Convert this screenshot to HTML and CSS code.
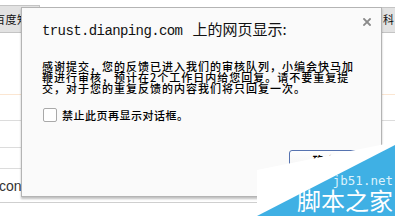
FILE: index.html
```html
<!DOCTYPE html>
<html>
<head>
<meta charset="utf-8">
<link rel="stylesheet" href="styles.css">
</head>
<body>
<div class="page">
  <div class="tabs">
    <div class="tab tab-left"><span class="tab-text">百度知</span></div>
    <div class="tab tab-right"><span class="tab-text">科</span></div>
  </div>
  <div class="row row-a"></div>
  <div class="row row-b"></div>
  <div class="row row-c"></div>
  <div class="row row-d"></div>
  <div class="row row-e"><span class="con">con</span></div>
</div>

<div class="dialog">
  <div class="title-row">
    <div class="title"><span class="mono">trust.dianping.com</span><span class="cjk-title">上的网页显示:</span></div>
    <svg class="close" width="8" height="8" viewBox="0 0 8 8"><path d="M1 1 L7 7 M7 1 L1 7" stroke="#8a8a8a" stroke-width="1.8" stroke-linecap="square"/></svg>
  </div>
  <div class="message">感谢提交，您的反馈已进入我们的审核队列，小编会快马加<br>鞭进行审核，预计在2个工作日内给您回复。请不要重复提<br>交，对于您的重复反馈的内容我们将只回复一次。</div>
  <label class="check-row"><span class="checkbox"></span><span class="check-label">禁止此页再显示对话框。</span></label>
  <div class="button-row"><div class="btn">确定</div></div>
</div>

<div class="watermark">
  <svg class="wm-bg" width="140" height="90" viewBox="0 0 140 90"><polygon points="2,44 140,16 140,90 2,90" fill="#ffffff"/><polygon points="2,90 140,19 140,90" fill="#3fb0e4"/></svg>
  <span class="wm-url">jb51.net</span>
  <span class="wm-name">脚本之家</span>
</div>
</body>
</html>
```

FILE: styles.css
```css
html, body {
  margin: 0;
  padding: 0;
}
body {
  width: 395px;
  height: 216px;
  overflow: hidden;
  position: relative;
  background: #ffffff;
  font-family: "Noto Sans CJK SC", "Liberation Sans", sans-serif;
}
.page {
  padding-top: 5px;
  display: flex;
  flex-direction: column;
}
.tabs {
  height: 28px;
  display: flex;
  justify-content: space-between;
}
.tab {
  box-sizing: border-box;
  height: 28px;
  background: #e2e2e2;
  border: 1px solid #c4c4c4;
  font-size: 11px;
  letter-spacing: 0.5px;
  line-height: 26px;
  color: #111;
  overflow: hidden;
  white-space: nowrap;
}
.tab-left {
  width: 40px;
  border-left: none;
}
.tab-left .tab-text {
  margin-left: -6px;
}
.tab-right {
  width: 25px;
  border-right: none;
  margin-top: 2px;
  height: 26px;
  padding-left: 12px;
  line-height: 22px;
}
.row {
  box-sizing: border-box;
}
.row-a {
  height: 62px;
  border-bottom: 1px solid #fbe6d2;
}
.row-b {
  height: 26px;
  border-bottom: 1px solid #dcdcdc;
}
.row-c {
  height: 27px;
  border-bottom: 1px solid #dcdcdc;
}
.row-d {
  height: 21px;
  border-bottom: 1px solid #dcdcdc;
}
.row-e {
  height: 34px;
  border-bottom: 1px solid #cfcfcf;
  font-family: "Liberation Sans", sans-serif;
  font-size: 14px;
  line-height: 30px;
  padding-top: 2px;
  color: #333;
}
.con {
  margin-left: -1px;
}

.dialog {
  position: absolute;
  left: 21px;
  top: 7px;
  width: 329px;
  height: 177px;
  background: #fafafa;
  border: 1px solid #b4b4b4;
  box-shadow: 0 2px 2px rgba(0, 0, 0, 0.25);
  padding: 11px 10px 0 20px;
  box-sizing: content-box;
  display: flex;
  flex-direction: column;
}
.title-row {
  display: flex;
  justify-content: space-between;
  align-items: flex-start;
  height: 18px;
}
.title {
  line-height: 18px;
  color: #111;
  white-space: nowrap;
}
.mono {
  font-family: "Liberation Mono", monospace;
  font-size: 14px;
  letter-spacing: -0.6px;
}
.cjk-title {
  font-family: "Noto Sans CJK SC", sans-serif;
  font-size: 15px;
  margin-left: 10px;
}
.close {
  margin-top: -1px;
}
.message {
  margin-top: 24px;
  font-size: 11px;
  font-weight: 500;
  letter-spacing: 1px;
  line-height: 11px;
  color: #000;
  white-space: nowrap;
}
.check-row {
  margin-top: 14px;
  display: flex;
  align-items: center;
  gap: 5px;
  height: 14px;
}
.checkbox {
  box-sizing: border-box;
  width: 14px;
  height: 14px;
  margin-left: 1px;
  border: 1px solid #a9a9a9;
  border-radius: 2px;
  background: #ffffff;
}
.check-label {
  font-size: 11px;
  font-weight: 500;
  letter-spacing: 0.5px;
  line-height: 14px;
  color: #000;
  white-space: nowrap;
}
.button-row {
  margin-top: 28px;
  display: flex;
  justify-content: flex-end;
  padding-right: 11px;
}
.btn {
  box-sizing: border-box;
  width: 71px;
  height: 26px;
  border: 1px solid #5673b0;
  border-radius: 3px;
  background: linear-gradient(#fefefe, #f0f0f0);
  font-size: 12px;
  font-weight: bold;
  line-height: 14px;
  padding-top: 3px;
  text-align: center;
  color: #000;
}

.watermark {
  position: absolute;
  right: 0;
  bottom: 0;
  width: 140px;
  height: 90px;
  display: flex;
  flex-direction: column;
  align-items: flex-end;
  justify-content: flex-end;
  padding-right: 2px;
  padding-bottom: 4px;
  box-sizing: border-box;
}
.wm-bg {
  position: absolute;
  left: 0;
  top: 0;
}
.wm-url {
  position: relative;
  font-family: "DejaVu Sans Mono", monospace;
  font-size: 12.5px;
  line-height: 13px;
  color: #dcf2fc;
  margin-bottom: 1px;
}
.wm-name {
  position: relative;
  font-family: "Noto Sans CJK SC", sans-serif;
  font-size: 24px;
  line-height: 24px;
  color: #ffffff;
}
```
